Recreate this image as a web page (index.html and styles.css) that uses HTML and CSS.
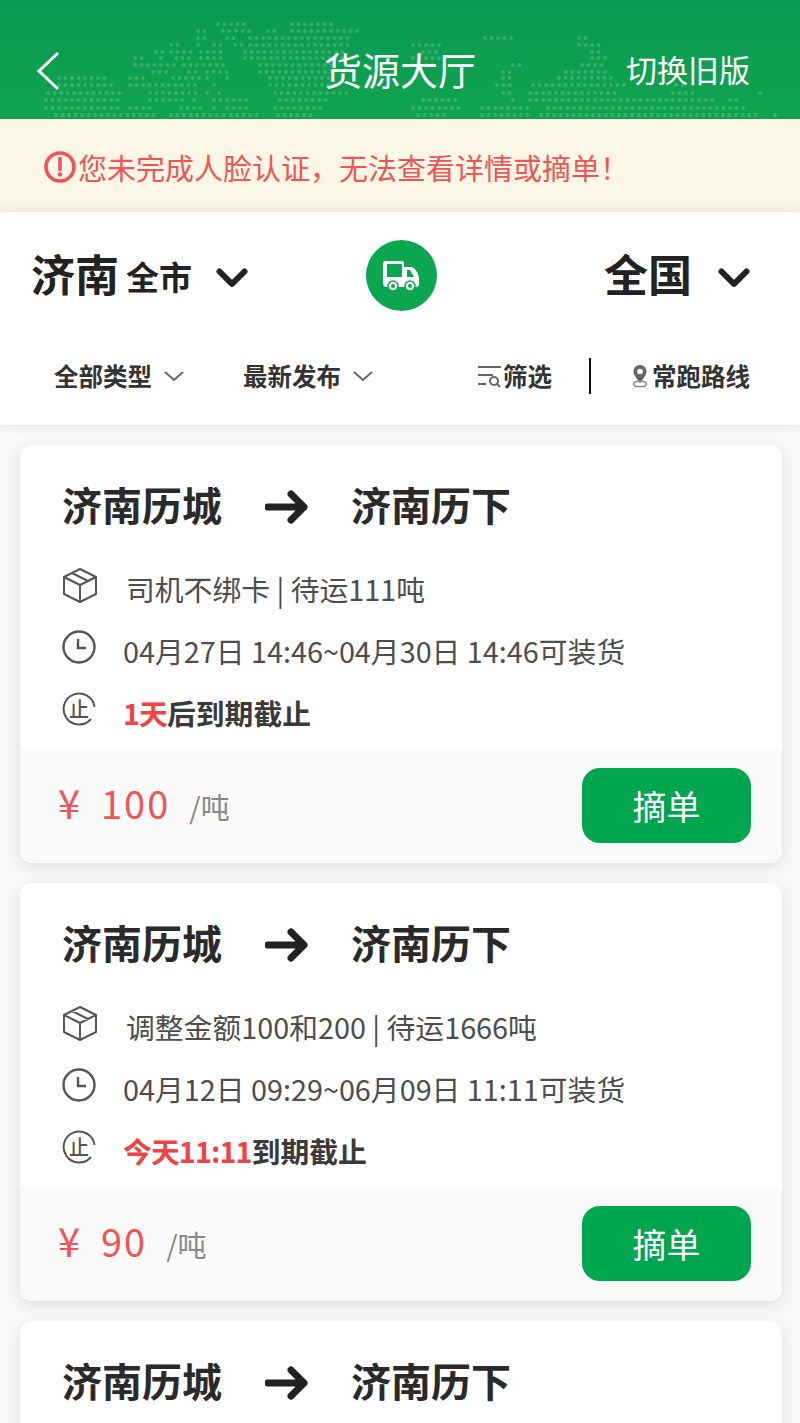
FILE: index.html
```html
<!DOCTYPE html>
<html lang="zh-CN">
<head>
    <meta charset="UTF-8">
    <meta name="viewport" content="width=device-width, initial-scale=1.0">
    <title>货源大厅</title>
    <link rel="stylesheet" href="styles.css">
</head>
<body>
    <div class="page">
        <header class="topbar">
            <!-- dotted world map behind the title -->
            <svg class="map" width="800" height="119" viewBox="0 0 800 119">
                <path d="M218 24H250M292 24H337
                         M198 31H209M223 31H250M268 31H281M292 31H363
                         M198 38H207M227 38H237M250 38H352M485 38H516M579 38H589
                         M171 45H182M198 45H204M214 45H224M235 45H245M250 45H352M413 45H444M579 45H602
                         M156 52H166M171 52H191M201 52H224M245 52H347M423 52H439M592 52H602
                         M135 58H148M161 58H162M176 58H191M201 58H227M245 58H347M413 58H449M592 58H607
                         M135 65H176M184 65H227M260 65H332M413 65H439M513 65H523M582 65H607
                         M153 72H171M189 72H196M207 72H227M260 72H332M503 72H513M566 72H607
                         M59 78H105M130 78H148M173 78H202M207 78H212M227 78H228M270 78H332M503 78H513M559 78H615
                         M59 85H115M130 85H196M214 85H215M270 85H337M497 85H513M533 85H625M676 85H686
                         M48 93H120M150 93H196M207 93H208M219 93H220M275 93H347M503 93H513M530 93H617M673 93H696M760 93H761
                         M46 100H120M150 100H189M194 100H195M214 100H250M280 100H332M423 100H462M513 100H514M530 100H717M730 100H740
                         M46 108H120M130 108H153M181 108H207M214 108H215M227 108H252M275 108H321M413 108H459M482 108H531M548 108H747
                         M56 115H158M171 115H219M224 115H263M278 115H311M418 115H449M482 115H531M541 115H760M775 115H776"/>
            </svg>
            <svg class="back" width="24" height="40" viewBox="0 0 24 40">
                <path d="M22 2L3 20L22 38" fill="none" stroke="#fff" stroke-width="3"/>
            </svg>
            <h1 class="title">货源大厅</h1>
            <a class="switch">切换旧版</a>
        </header>

        <div class="notice">
            <svg width="32" height="32" viewBox="0 0 32 32">
                <circle cx="16" cy="16" r="14" fill="none" stroke="#ee5555" stroke-width="3.6"/>
                <path d="M16 7.5V18.5" stroke="#ee5555" stroke-width="3.6" stroke-linecap="round"/>
                <circle cx="16" cy="23.5" r="2.2" fill="#ee5555"/>
            </svg>
            <span>您未完成人脸认证，无法查看详情或摘单！</span>
        </div>

        <section class="panel">
            <div class="route-picker">
                <div class="place">
                    <span class="place-name">济南</span>
                    <span class="place-sub">全市</span>
                    <svg class="place-arrow" width="32" height="20" viewBox="0 0 32 20">
                        <path d="M3.500 3.500L16 16L28.500 3.500" fill="none" stroke="#222" stroke-width="6" stroke-linecap="round" stroke-linejoin="round"/>
                    </svg>
                </div>
                <div class="truck">
                    <svg width="71" height="71" viewBox="0 0 71 71">
                        <path d="M20 21H36a2 2 0 0 1 2 2V27H45C49 27 53 34 53 39V44C53 46 52 47 50 47H20C18 47 17 45 17 43V24C17 22 18 21 20 21Z" fill="#fff"/>
                        <rect x="21" y="24" width="15" height="13" fill="#0aa650"/>
                        <path d="M41 30H44L48 37H41Z" fill="#0aa650"/>
                        <circle cx="27" cy="46" r="5" fill="#fff" stroke="#0aa650" stroke-width="1.5"/>
                        <circle cx="27" cy="46" r="2" fill="#0aa650"/>
                        <circle cx="44" cy="46" r="5" fill="#fff" stroke="#0aa650" stroke-width="1.5"/>
                        <circle cx="44" cy="46" r="2" fill="#0aa650"/>
                    </svg>
                </div>
                <div class="place place-right">
                    <span class="place-name">全国</span>
                    <svg class="place-arrow" width="32" height="20" viewBox="0 0 32 20">
                        <path d="M3.500 3.500L16 16L28.500 3.500" fill="none" stroke="#222" stroke-width="6" stroke-linecap="round" stroke-linejoin="round"/>
                    </svg>
                </div>
            </div>
            <div class="filters">
                <div class="filter">
                    <span>全部类型</span>
                    <svg width="22" height="12" viewBox="0 0 22 12"><path d="M2 2L11 10L20 2" fill="none" stroke="#666" stroke-width="2"/></svg>
                </div>
                <div class="filter filter-second">
                    <span>最新发布</span>
                    <svg width="22" height="12" viewBox="0 0 22 12"><path d="M2 2L11 10L20 2" fill="none" stroke="#666" stroke-width="2"/></svg>
                </div>
                <div class="tool tool-first">
                    <svg width="25" height="24" viewBox="0 0 25 24">
                        <path d="M1 3H24M1 11H16M1 20H9" fill="none" stroke="#666" stroke-width="2"/>
                        <circle cx="17" cy="17" r="4" fill="none" stroke="#666" stroke-width="2"/>
                        <path d="M20 20L23 23" stroke="#666" stroke-width="2"/>
                    </svg>
                    <span>筛选</span>
                </div>
                <div class="divider"></div>
                <div class="tool">
                    <svg width="16" height="24" viewBox="0 0 16 24">
                        <path d="M8 1C4 1 1.500 4 1.500 7.500C1.500 11 5 15 8 19C11 15 14.500 11 14.500 7.500C14.500 4 12 1 8 1Z" fill="#666"/>
                        <circle cx="8" cy="7.500" r="2.800" fill="#fff"/>
                        <ellipse cx="8" cy="20" rx="6.500" ry="2.800" fill="none" stroke="#888" stroke-width="1.500"/>
                    </svg>
                    <span>常跑路线</span>
                </div>
            </div>
        </section>

        <main class="list">
            <article class="card">
                <div class="card-body">
                    <div class="lane">
                        <span>济南历城</span>
                        <svg width="44" height="34" viewBox="0 0 44 34"><path d="M3 17H39M26 4L39 17L26 30" fill="none" stroke="#222" stroke-width="7" stroke-linecap="round" stroke-linejoin="round"/></svg>
                        <span>济南历下</span>
                    </div>
                    <div class="info">
                        <svg class="icon-box" width="36" height="36" viewBox="0 0 36 36">
                            <path d="M18 2L34 10V27L18 35L2 27V10ZM2 10L18 18L34 10M18 18V35M10 6L26 14" fill="none" stroke="#555" stroke-width="2" stroke-linejoin="round"/>
                        </svg>
                        <span>司机不绑卡 | 待运111吨</span>
                    </div>
                    <div class="info">
                        <svg class="icon-round" width="34" height="34" viewBox="0 0 34 34">
                            <circle cx="17" cy="17" r="15.500" fill="none" stroke="#555" stroke-width="2.400"/>
                            <path d="M16 9V18H24" fill="none" stroke="#555" stroke-width="2.400"/>
                        </svg>
                        <span>04月27日 14:46~04月30日 14:46可装货</span>
                    </div>
                    <div class="info info-strong">
                        <svg class="icon-round" width="34" height="34" viewBox="0 0 34 34">
                            <path d="M32.500 15A15.500 15.500 0 1 0 29 27" fill="none" stroke="#555" stroke-width="2"/>
                            <text x="17" y="25" text-anchor="middle" class="stop-mark">止</text>
                        </svg>
                        <span><em>1天</em>后到期截止</span>
                    </div>
                </div>
                <div class="card-foot">
                    <div class="price">
                        <span class="yen">¥</span>
                        <span class="amount">100</span>
                        <span class="unit">/吨</span>
                    </div>
                    <button class="take">摘单</button>
                </div>
            </article>

            <article class="card">
                <div class="card-body">
                    <div class="lane">
                        <span>济南历城</span>
                        <svg width="44" height="34" viewBox="0 0 44 34"><path d="M3 17H39M26 4L39 17L26 30" fill="none" stroke="#222" stroke-width="7" stroke-linecap="round" stroke-linejoin="round"/></svg>
                        <span>济南历下</span>
                    </div>
                    <div class="info">
                        <svg class="icon-box" width="36" height="36" viewBox="0 0 36 36">
                            <path d="M18 2L34 10V27L18 35L2 27V10ZM2 10L18 18L34 10M18 18V35M10 6L26 14" fill="none" stroke="#555" stroke-width="2" stroke-linejoin="round"/>
                        </svg>
                        <span>调整金额100和200 | 待运1666吨</span>
                    </div>
                    <div class="info">
                        <svg class="icon-round" width="34" height="34" viewBox="0 0 34 34">
                            <circle cx="17" cy="17" r="15.500" fill="none" stroke="#555" stroke-width="2.400"/>
                            <path d="M16 9V18H24" fill="none" stroke="#555" stroke-width="2.400"/>
                        </svg>
                        <span>04月12日 09:29~06月09日 11:11可装货</span>
                    </div>
                    <div class="info info-strong">
                        <svg class="icon-round" width="34" height="34" viewBox="0 0 34 34">
                            <path d="M32.500 15A15.500 15.500 0 1 0 29 27" fill="none" stroke="#555" stroke-width="2"/>
                            <text x="17" y="25" text-anchor="middle" class="stop-mark">止</text>
                        </svg>
                        <span><em>今天11:11</em>到期截止</span>
                    </div>
                </div>
                <div class="card-foot">
                    <div class="price">
                        <span class="yen">¥</span>
                        <span class="amount">90</span>
                        <span class="unit">/吨</span>
                    </div>
                    <button class="take">摘单</button>
                </div>
            </article>

            <article class="card">
                <div class="card-body">
                    <div class="lane">
                        <span>济南历城</span>
                        <svg width="44" height="34" viewBox="0 0 44 34"><path d="M3 17H39M26 4L39 17L26 30" fill="none" stroke="#222" stroke-width="7" stroke-linecap="round" stroke-linejoin="round"/></svg>
                        <span>济南历下</span>
                    </div>
                </div>
            </article>
        </main>
    </div>
</body>
</html>
```
FILE: styles.css
```css
* {
    box-sizing: border-box;
}
html, body {
    margin: 0;
    padding: 0;
}
body {
    font-family: "Noto Sans CJK SC", "Noto Sans", sans-serif;
    background-color: #f8f8f8;
    color: #222;
}
.page {
    width: 800px;
    height: 1423px;
    overflow: hidden;
}

/* top bar */
.topbar {
    position: relative;
    height: 119px;
    padding: 18px 50px 0 36px;
    display: grid;
    grid-template-columns: 1fr auto 1fr;
    align-items: center;
    color: white;
    background: linear-gradient(180deg, #0a9a54 0%, #10a34d 100%);
}
.map {
    position: absolute;
    left: 0;
    top: 0;
}
.map path {
    fill: none;
    stroke: rgba(255,255,255,0.17);
    stroke-width: 4;
    stroke-linecap: round;
    stroke-dasharray: 0 6.5;
}
.back {
    position: relative;
    display: block;
    margin-top: 4px;
}
.title {
    position: relative;
    margin: 0 0 0 14px;
    font-size: 38px;
    font-weight: 400;
    line-height: 48px;
}
.switch {
    position: relative;
    justify-self: end;
    font-size: 31px;
    line-height: 44px;
}

/* face check notice */
.notice {
    height: 93px;
    padding: 3px 0 0 44px;
    display: flex;
    align-items: center;
    gap: 2px;
    font-size: 29px;
    color: #ee5555;
    background-color: #fcf6e6;
}

/* from / to picker and filters */
.panel {
    position: relative;
    height: 213px;
    padding-top: 28px;
    background-color: white;
    box-shadow: 0 0 12px rgba(0,0,0,0.09);
}
.route-picker {
    display: grid;
    grid-template-columns: 335px 71px 1fr;
    height: 71px;
    padding: 0 50px 0 31px;
    align-items: center;
}
.place {
    display: flex;
    align-items: center;
}
.place-right {
    justify-content: flex-end;
}
.place-name {
    padding-bottom: 6px;
    font-size: 44px;
    line-height: 60px;
    font-weight: 700;
}
.place-sub {
    margin-left: 7px;
    padding-bottom: 0;
    font-size: 33px;
    line-height: 60px;
    font-weight: 700;
}
.place-arrow {
    margin: 4px 0 0 24px;
}
.place-right .place-arrow {
    margin-left: 26px;
}
.truck {
    width: 71px;
    height: 71px;
    border-radius: 50%;
    background-color: #0aa650;
}
.truck svg {
    display: block;
}
.filters {
    display: flex;
    align-items: center;
    height: 36px;
    margin-top: 47px;
    padding: 0 50px 0 54px;
    font-size: 24.500px;
    line-height: 34px;
    font-weight: 700;
    color: #333;
}
.filter {
    display: flex;
    align-items: center;
    gap: 11px;
}
.filter-second {
    margin-left: 58px;
}
.tool {
    display: flex;
    align-items: center;
    gap: 4px;
}
.tool-first {
    margin-left: auto;
    gap: 1px;
}
.divider {
    width: 2px;
    height: 36px;
    margin: 0 41px 0 37px;
    background-color: #111;
}

/* cards */
.list {
    display: flex;
    flex-direction: column;
    gap: 20px;
    padding: 20px 18px 0 20px;
}
.card {
    flex-shrink: 0;
    background-color: white;
    border-radius: 12px;
    box-shadow: 0 4px 14px rgba(0,0,0,0.1);
    overflow: hidden;
}
.card-body {
    height: 304px;
    padding: 29px 0 0 42px;
}
.lane {
    display: flex;
    align-items: center;
    height: 60px;
    font-size: 40px;
    font-weight: 700;
    color: #2a2a2a;
}
.lane svg {
    margin: 6px 42px 0 43px;
}
.info {
    display: flex;
    align-items: center;
    height: 62px;
    font-size: 28.800px;
    color: #4d4d4d;
}
.lane + .info {
    margin-top: 23px;
}
.info svg {
    flex-shrink: 0;
    margin-bottom: 6px;
}
.info .icon-box {
    margin-right: 28px;
}
.info .icon-round {
    margin-right: 27px;
}
.info-strong {
    font-weight: 700;
    color: #3a3a3a;
}
.info-strong em {
    font-style: normal;
    letter-spacing: -0.900px;
    color: #ee4444;
}
.stop-mark {
    font-size: 20px;
    font-weight: 500;
    fill: #555;
}
.card-foot {
    display: flex;
    align-items: center;
    justify-content: space-between;
    height: 114px;
    padding: 0 31px 2px 38px;
    background-color: #fafafa;
}
.price {
    display: flex;
    align-items: baseline;
    padding-bottom: 6px;
    color: #ee5555;
}
.yen {
    width: 43px;
    font-size: 40px;
}
.amount {
    font-size: 38px;
    letter-spacing: 2px;
}
.unit {
    margin-left: 19px;
    font-size: 29px;
    color: #888;
}
.take {
    width: 169px;
    height: 75px;
    padding: 0;
    border: none;
    border-radius: 18px;
    font-family: inherit;
    font-size: 34px;
    color: white;
    background-color: #00a550;
}
```
